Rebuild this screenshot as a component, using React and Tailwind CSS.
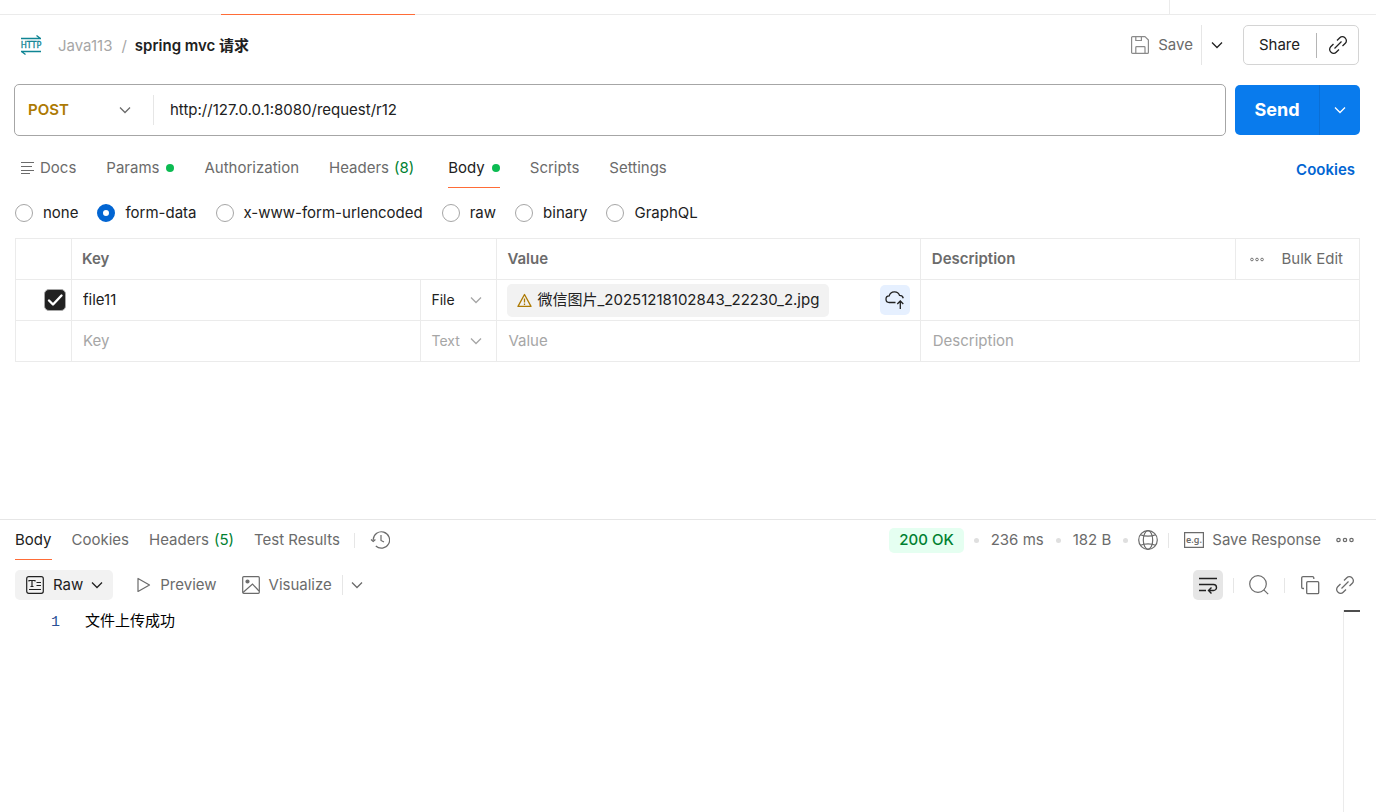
import React, { useState } from "react";
import clsx from "clsx";

const Icon = ({ size = 20, className, children, strokeWidth = 1.2 }) => (
	<svg
		width={size}
		height={size}
		viewBox={`0 0 ${size} ${size}`}
		fill="none"
		stroke="currentColor"
		strokeWidth={strokeWidth}
		className={clsx("flex-shrink-0", className)}
		aria-hidden="true"
	>
		{children}
	</svg>
);

const ChevronIcon = ({ className }) => (
	<Icon size={12} className={className} strokeWidth={1.3}>
		<path d="M1 3.5l5 5 5-5" />
	</Icon>
);

const LinkIcon = ({ className }) => (
	<Icon className={className} strokeWidth={1.3}>
		<path d="M9 5.5l2.8-2.8a3.6 3.6 0 0 1 5.1 0l.4.4a3.6 3.6 0 0 1 0 5.1L14.5 11" />
		<path d="M11 14.5l-2.8 2.8a3.6 3.6 0 0 1-5.1 0l-.4-.4a3.6 3.6 0 0 1 0-5.1L5.5 9" />
		<path d="M6.5 13.5l7-7" />
	</Icon>
);

const MoreIcon = ({ className }) => (
	<svg
		width="18"
		height="6"
		viewBox="0 0 18 6"
		fill="none"
		stroke="currentColor"
		strokeWidth="1.2"
		className={className}
		aria-hidden="true"
	>
		<circle cx="2.5" cy="3" r="1.7" />
		<circle cx="9" cy="3" r="1.7" />
		<circle cx="15.5" cy="3" r="1.7" />
	</svg>
);

const HttpIcon = () => (
	<svg width="22" height="20" viewBox="0 0 22 20" fill="none" className="flex-shrink-0 text-[#0f8594]" aria-hidden="true">
		<path d="M1 3.5h20M16.5.5l4 3M1 16.5h20M1.5 16.5l4 3" stroke="currentColor" strokeWidth="1.3" />
		<text x="11" y="13.3" textAnchor="middle" fontSize="9" fill="currentColor" stroke="currentColor" strokeWidth=".3" fontFamily="DejaVu Sans Condensed, Noto Sans, sans-serif">
			HTTP
		</text>
	</svg>
);

const Divider = ({ className }) => <span className={clsx("w-px bg-[#e6e6e6]", className)} />;

const Dot = () => <span className="h-[5px] w-[5px] rounded-full bg-[#dfdfdf]" />;

const REQUEST_TABS = [
	{ label: "Docs", docs: true },
	{ label: "Params", dot: true },
	{ label: "Authorization" },
	{ label: "Headers", count: 8, className: "mr-1" },
	{ label: "Body", dot: true },
	{ label: "Scripts" },
	{ label: "Settings" },
];

const BODY_TYPES = ["none", "form-data", "x-www-form-urlencoded", "raw", "binary", "GraphQL"];

const RESPONSE_TABS = [
	{ label: "Body" },
	{ label: "Cookies" },
	{ label: "Headers", count: 5 },
	{ label: "Test Results" },
];

const Tab = ({ tab, active, onClick }) => (
	<button
		type="button"
		onClick={onClick}
		className={clsx("flex h-10 flex-col whitespace-nowrap", active && "text-[#212121]", tab.className)}
	>
		<span className="flex flex-1 items-center">
			{tab.docs && (
				<svg width="14" height="14" viewBox="0 0 14 14" stroke="currentColor" strokeWidth="1.2" className="mr-[5px]" aria-hidden="true">
					<path d="M0 1.5h13M0 5.5h11M0 9.5h13M0 12.5h9" />
				</svg>
			)}
			{tab.label}
			{tab.count && <span className="ml-[5px] text-[#007f31]">({tab.count})</span>}
			{tab.dot && <span className="ml-[7px] h-2 w-2 rounded-full bg-[#0cbb52]" />}
		</span>
		<span className={clsx("h-px w-full", active && "bg-[#ff6c37]")} />
	</button>
);

const RequestHeader = () => (
	<header className="flex h-[60px] items-center pl-5 pr-[17px]">
		<HttpIcon />
		<nav className="ml-4 flex items-center pt-0.5" aria-label="Breadcrumb">
			<a href="#java113" className="text-[#a6a6a6]">Java113</a>
			<span className="ml-[9px] mr-2 text-[#a6a6a6]">/</span>
			<h1 className="font-semibold">spring mvc 请求</h1>
		</nav>

		<div className="ml-auto flex items-center">
			<button type="button" className="flex items-center gap-2 text-[#6b6b6b]">
				<Icon className="text-[#8a8a8a]">
					<path d="M2.6 1.6H15l3.4 3.4v12.4a1 1 0 0 1-1 1H2.6a1 1 0 0 1-1-1V2.6a1 1 0 0 1 1-1z" strokeLinejoin="round" />
					<path d="M5.8 1.6v3.9h5.6V1.6M5.8 18.4v-6a.8.8 0 0 1 .8-.8h7.6a.8.8 0 0 1 .8.8v6" />
				</Icon>
				Save
			</button>
			<Divider className="ml-2 h-10" />
			<button type="button" className="ml-[9px]" aria-label="Save options">
				<ChevronIcon />
			</button>
			<div className="ml-5 flex h-10 items-center rounded-[5px] border border-[#d4d4d4]">
				<button type="button" className="pl-[15px] pr-4">Share</button>
				<span className="h-[25px] w-px bg-[#b5b5b5]" />
				<button type="button" className="pl-[11px] pr-[10px]" aria-label="Copy link">
					<LinkIcon />
				</button>
			</div>
		</div>
	</header>
);

const UrlBar = () => (
	<form className="flex items-center gap-[9px] pl-[14px] pr-4 pt-[9px]" onSubmit={(e) => e.preventDefault()}>
		<div className="flex h-[52px] flex-1 items-center rounded-[5px] border border-[#a6a6a6]">
			<div className="grid w-[138px] items-center">
				<select
					aria-label="Method"
					defaultValue="POST"
					className="col-start-1 row-start-1 appearance-none bg-transparent pl-[13px] font-semibold text-[#ad7a03] outline-none"
				>
					<option>GET</option>
					<option>POST</option>
				</select>
				<ChevronIcon className="pointer-events-none col-start-1 row-start-1 mr-[22px] justify-self-end text-[#6b6b6b]" />
			</div>
			<Divider className="h-[30px]" />
			<input
				type="text"
				aria-label="Request URL"
				defaultValue="http://127.0.0.1:8080/request/r12"
				className="min-w-0 flex-1 px-4 outline-none"
			/>
		</div>
		<div className="flex h-[50px] overflow-hidden rounded-[5px] bg-[#097bed] text-white">
			<button type="submit" className="w-[84px] text-lg font-bold">Send</button>
			<button type="button" className="flex w-[41px] items-center justify-center border-l border-[#0a6fd6]" aria-label="Send options">
				<ChevronIcon />
			</button>
		</div>
	</form>
);

const TypeSelect = ({ label, value, muted }) => (
	<div className="grid items-center">
		<select
			aria-label={label}
			defaultValue={value}
			className={clsx(
				"col-start-1 row-start-1 appearance-none bg-transparent pl-[10px] text-sm outline-none",
				muted && "text-[#a6a6a6]"
			)}
		>
			<option>Text</option>
			<option>File</option>
		</select>
		<ChevronIcon className="pointer-events-none col-start-1 row-start-1 mr-[14px] justify-self-end text-[#a6a6a6]" />
	</div>
);

const FormDataTable = () => (
	<table className="w-full table-fixed border-collapse text-left [&_td]:border [&_td]:border-[#ebebeb] [&_td]:p-0 [&_th]:border [&_th]:border-[#ebebeb] [&_th]:p-0 [&_tr]:h-[41px]">
		<colgroup>
			<col className="w-[56px]" />
			<col className="w-[26%]" />
			<col className="w-[76px]" />
			<col className="w-[31.5%]" />
			<col />
			<col className="w-[124px]" />
		</colgroup>
		<thead className="text-[#6b6b6b]">
			<tr>
				<th aria-label="Enabled" />
				<th colSpan={2}><span className="pl-[10px] font-semibold">Key</span></th>
				<th><span className="pl-[10px] font-semibold">Value</span></th>
				<th><span className="pl-[11px] font-semibold">Description</span></th>
				<th>
					<div className="flex items-center justify-between pl-[14px] pr-4 font-normal">
						<button type="button" aria-label="More columns">
							<MoreIcon className="h-[5px] w-[14px]" />
						</button>
						<button type="button">Bulk Edit</button>
					</div>
				</th>
			</tr>
		</thead>
		<tbody>
			<tr>
				<td>
					<label className="mr-[5px] grid items-center justify-end">
						<input
							type="checkbox"
							defaultChecked
							aria-label="Enable file11"
							className="col-start-1 row-start-1 h-[22px] w-[22px] appearance-none rounded-[5px] border border-[#a6a6a6] checked:bg-[#212121]"
						/>
						<Icon size={22} className="pointer-events-none col-start-1 row-start-1 text-white" strokeWidth={2.4}>
							<path d="M5 11.5l4 4 8.5-9" strokeLinecap="round" strokeLinejoin="round" />
						</Icon>
					</label>
				</td>
				<td><input type="text" aria-label="Key" defaultValue="file11" className="w-full px-[11px] outline-none" /></td>
				<td><TypeSelect label="Type of file11" value="File" /></td>
				<td>
					<div className="flex items-center justify-between px-[10px]">
						<span className="flex h-[33px] items-center gap-[5px] rounded-[5px] bg-[#f2f2f2] px-[10px]">
							<Icon size={15} className="text-[#ad7a03]" strokeWidth={1.3}>
								<path d="M7.5 1.5L14 13.4H1z" strokeLinejoin="round" />
								<path d="M7.5 5.5v4M7.5 10.5v1.4" />
							</Icon>
							微信图片_20251218102843_22230_2.jpg
						</span>
						<button type="button" className="rounded-[5px] bg-[#e6f0ff] p-[5px]" aria-label="Upload file">
							<Icon strokeWidth={1.3}>
								<path d="M10.5 12.5H4.4a3.3 3.3 0 0 1-.2-6.6 5.5 5.5 0 0 1 10.4-.5 4 4 0 0 1 3.7 2.8" />
								<path d="M15.3 19v-7.5M12.3 14l3-3 3 3" />
							</Icon>
						</button>
					</div>
				</td>
				<td colSpan={2}><input type="text" aria-label="Description" className="w-full px-3 outline-none" /></td>
			</tr>
			<tr>
				<td />
				<td><input type="text" aria-label="New key" placeholder="Key" className="w-full px-[11px] outline-none placeholder:text-[#a6a6a6]" /></td>
				<td><TypeSelect label="Type of new key" value="Text" muted /></td>
				<td><input type="text" aria-label="New value" placeholder="Value" className="w-full px-[11px] outline-none placeholder:text-[#a6a6a6]" /></td>
				<td colSpan={2}><input type="text" aria-label="New description" placeholder="Description" className="w-full px-3 outline-none placeholder:text-[#a6a6a6]" /></td>
			</tr>
		</tbody>
	</table>
);

const ResponseStatus = () => (
	<div className="flex items-center whitespace-nowrap">
		<span className="mr-[10px] flex h-[25px] items-center rounded-[5px] bg-[#e5fff1] px-[10px] font-medium text-[#007f31]">
			200 OK
		</span>
		<Dot />
		<span className="mx-3">236 ms</span>
		<Dot />
		<span className="mx-3">182 B</span>
		<Dot />
		<button type="button" className="ml-[10px]" aria-label="Network">
			<Icon>
				<circle cx="10" cy="10" r="9.3" />
				<ellipse cx="10" cy="10" rx="4.7" ry="9.3" />
				<path d="M2.5 4.7c4 2 11 2 15 0M2.5 15.3c4-2 11-2 15 0" />
			</Icon>
		</button>
		<Divider className="ml-[10px] h-[15px]" />
		<button type="button" className="ml-[15px] flex items-center gap-2">
			<Icon>
				<path d="M.6 2.6h18.800v14.800H.6z" />
				<text x="10" y="12.5" textAnchor="middle" fontSize="9" fontWeight="600" fill="currentColor" stroke="none" fontFamily="Noto Sans, sans-serif">
					e.g.
				</text>
			</Icon>
			Save Response
		</button>
		<button type="button" className="ml-[15px]" aria-label="More actions">
			<MoreIcon />
		</button>
	</div>
);

const ResponseToolbar = () => (
	<div className="mt-[10px] flex h-[30px] items-center justify-between pl-[15px] pr-[21px]">
		<div className="flex items-center">
			<button type="button" className="flex h-[30px] items-center gap-2 rounded-[5px] bg-[#f2f2f2] px-[10px] text-[#212121]">
				<Icon>
					<rect x="1.7" y="1.7" width="16.6" height="16.6" rx="2" />
					<path d="M4 6.5v-1h6v1M7 5.5v6M5.5 11.5h3M11.5 7.5H16M11.5 10.5H16M4 14.5h12" />
				</Icon>
				Raw
				<ChevronIcon />
			</button>
			<button type="button" className="ml-[19px] flex items-center gap-2">
				<Icon>
					<path d="M6 3.5v13l11.5-6.5z" strokeLinejoin="round" />
				</Icon>
				Preview
			</button>
			<button type="button" className="ml-6 flex items-center gap-2">
				<Icon>
					<rect x="1.7" y="1.7" width="16.6" height="16.6" rx="1" />
					<path d="M2 17.5l9.500-8.500 6.500 7" />
					<circle cx="6.5" cy="6.5" r="1.5" fill="currentColor" />
				</Icon>
				Visualize
			</button>
			<Divider className="ml-[10px] h-5" />
			<button type="button" className="ml-2" aria-label="Visualize options">
				<ChevronIcon />
			</button>
		</div>

		<div className="flex items-center">
			<button type="button" className="rounded-[5px] bg-[#e6e6e6] p-[5px] text-[#212121]" aria-label="Wrap lines">
				<Icon strokeWidth={1.4}>
					<path d="M1 3.5h18M1 9.5h14.5a3 3 0 0 1 0 6H11M1 15.5h7M13.5 12.5l-3 3 3 3" />
				</Icon>
			</button>
			<Divider className="mx-[10px] h-[15px]" />
			<button type="button" className="px-[5px]" aria-label="Search">
				<Icon>
					<circle cx="9" cy="9" r="8.3" />
					<path d="M14.8 14.8l4.4 4.4" />
				</Icon>
			</button>
			<Divider className="mx-[10px] h-[15px]" />
			<button type="button" className="px-[5px]" aria-label="Copy response">
				<Icon strokeWidth={1.3}>
					<rect x="6.7" y="6.7" width="12" height="12" rx="1" />
					<path d="M4 13.5H3a1.3 1.3 0 0 1-1.3-1.3V3A1.3 1.3 0 0 1 3 1.7h9.5a1.3 1.3 0 0 1 1.3 1.3v1" />
				</Icon>
			</button>
			<button type="button" className="ml-[10px]" aria-label="Copy response link">
				<LinkIcon />
			</button>
		</div>
	</div>
);

export default function App() {
	const [requestTab, setRequestTab] = useState("Body");
	const [responseTab, setResponseTab] = useState("Body");

	return (
		<div className="flex min-h-screen flex-col bg-white font-['Inter','Noto_Sans_CJK_SC',sans-serif] text-[15px] leading-5 text-[#212121]">
			{/* Open request tabs */}
			<div className="flex h-[15px]">
				<div className="w-[221px] border-b border-[#ebebeb]" />
				<div className="w-[194px] border-b border-[#ff6c37]" />
				<div className="flex-1 border-b border-[#ebebeb]" />
				<div className="w-[207px] border-b border-l border-[#ebebeb]" />
			</div>

			<section className="pb-[157px]">
				<RequestHeader />
				<UrlBar />

				<div className="mt-3 flex items-center justify-between pl-[21px] pr-[21px] text-[#6b6b6b]">
					<div className="flex gap-[30px]">
						{REQUEST_TABS.map((tab) => (
							<Tab
								key={tab.label}
								tab={tab}
								active={requestTab === tab.label}
								onClick={() => setRequestTab(tab.label)}
							/>
						))}
					</div>
					<a href="#cookies" className="pt-1 font-semibold text-[#0265d2]">Cookies</a>
				</div>

				<div className="flex h-[50px] items-center gap-[19px] pl-[15px]">
					{BODY_TYPES.map((type) => (
						<label key={type} className="flex items-center gap-[10px]">
							<input
								type="radio"
								name="body-type"
								defaultChecked={type === "form-data"}
								className="h-[18px] w-[18px] appearance-none rounded-full border border-[#a6a6a6] checked:border-[6px] checked:border-[#0265d2]"
							/>
							{type}
						</label>
					))}
				</div>

				<div className="pl-[15px] pr-4">
					<FormDataTable />
				</div>
			</section>

			<section className="flex flex-1 flex-col border-t border-[#e6e6e6] text-[#6b6b6b]">
				<div className="flex items-center justify-between pl-[15px] pr-[22px]">
					<div className="flex items-center">
						<div className="flex gap-5">
							{RESPONSE_TABS.map((tab) => (
								<Tab
									key={tab.label}
									tab={tab}
									active={responseTab === tab.label}
									onClick={() => setResponseTab(tab.label)}
								/>
							))}
						</div>
						<Divider className="ml-[14px] h-[15px]" />
						<button type="button" className="ml-[15px]" aria-label="History">
							<Icon>
								<path d="M3.2 10.500V9.500a8.200 8.200 0 1 1 2.600 6.500" />
								<path d="M1 9.500l2.200 2 2.200-2M11 5v5.500l3 1.500" />
							</Icon>
						</button>
					</div>
					<ResponseStatus />
				</div>

				<ResponseToolbar />

				<div className="mt-[10px] flex flex-1 pr-4 text-black">
					<span className="w-[60px] pt-[3px] text-right font-['Liberation_Mono',monospace] text-[#2a4f96]">1</span>
					<pre className="flex-1 whitespace-pre-wrap pl-[25px] pt-[3px] font-['Liberation_Mono','Noto_Sans_CJK_SC',monospace]">文件上传成功</pre>
					<div className="w-[17px] border-l border-[#ebebeb]">
						<div className="h-[2px] bg-[#4d4d4d]" />
					</div>
				</div>
			</section>
		</div>
	);
}
